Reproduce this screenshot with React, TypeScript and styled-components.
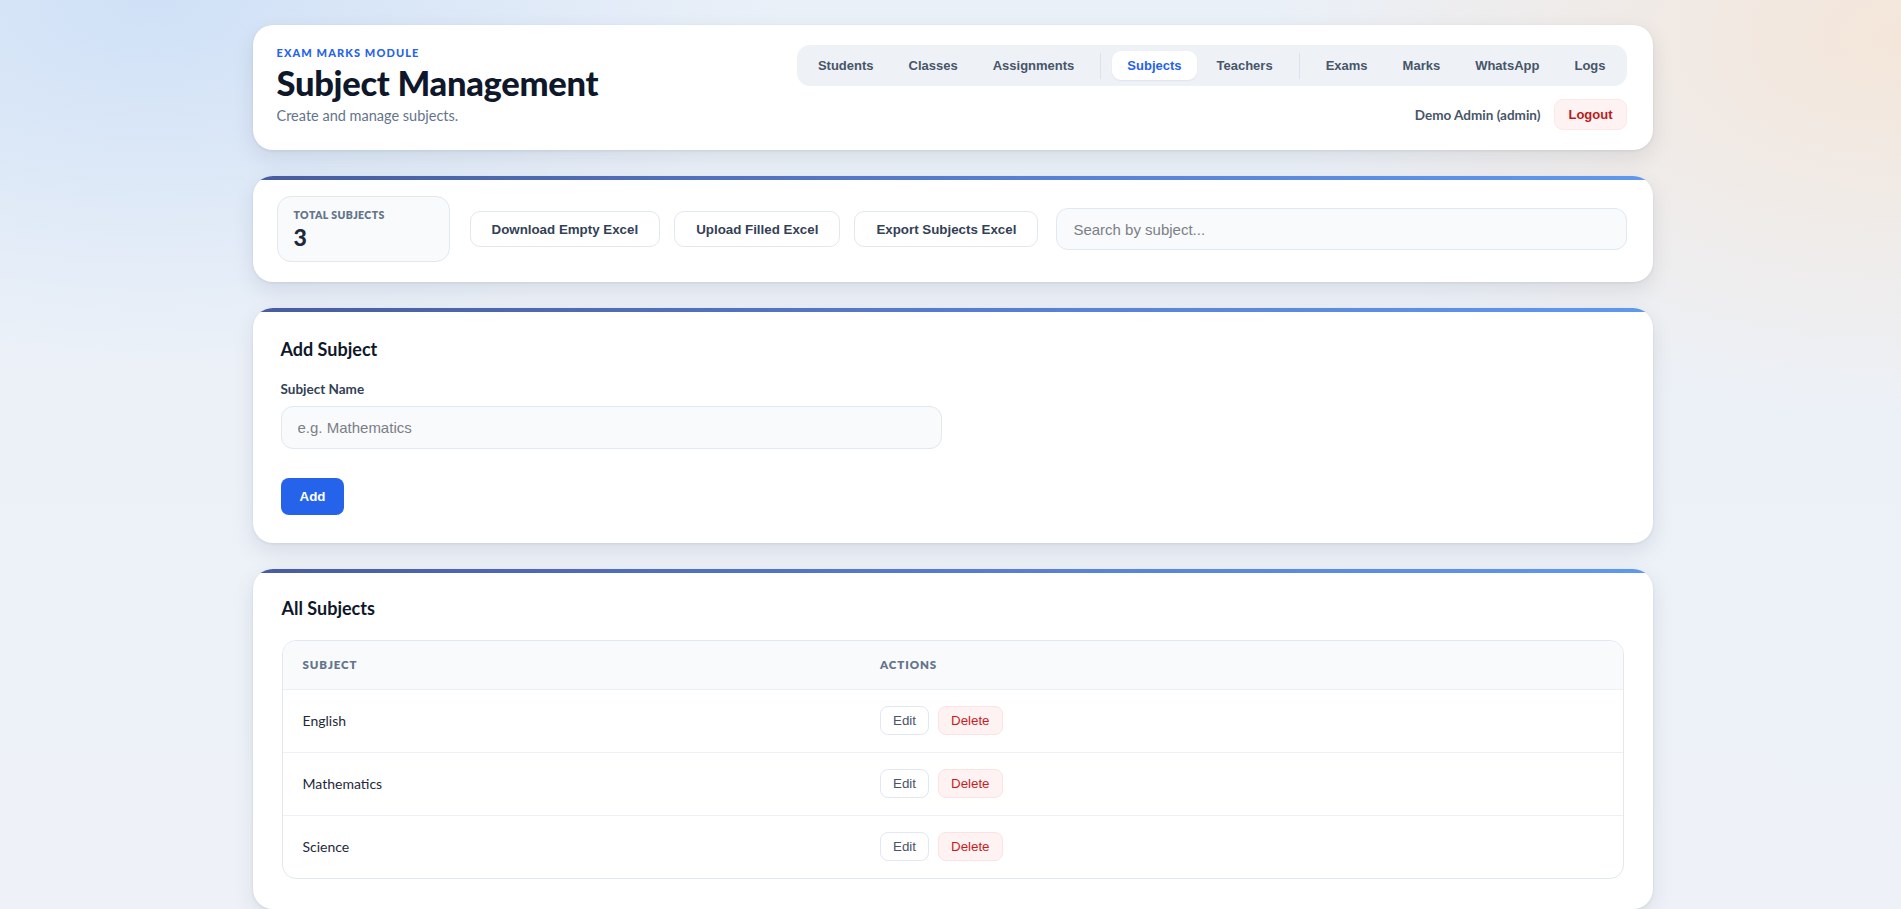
import styled, { createGlobalStyle } from 'styled-components';

const GlobalStyle = createGlobalStyle`
  html, body {
    margin: 0;
    padding: 0;
  }

  body {
    min-height: 100vh;
    padding-left: 4px;
    font-family: Lato, "Noto Sans", Arial, sans-serif;
    color: #0f172a;
    background:
      radial-gradient(ellipse 900px 520px at 8% 0%, rgba(196, 218, 246, 0.7), transparent 70%),
      radial-gradient(ellipse 900px 560px at 100% 4%, rgba(246, 228, 212, 0.85), transparent 70%),
      linear-gradient(180deg, #eaf0f8 0%, #eef2f8 100%);
    background-attachment: fixed;
  }

  * {
    box-sizing: border-box;
  }
`;

const Page = styled.div`
  max-width: 1400px;
  margin: 0 auto;
  padding: 25px 0 30px;
  display: flex;
  flex-direction: column;
  gap: 26px;
`;

const Card = styled.section<{ $accent?: boolean }>`
  border-radius: 20px;
  background: ${(p) =>
    p.$accent
      ? 'linear-gradient(90deg, #485c9f 0%, #5a82d6 60%, #5f98ee 100%) top / 100% 4px no-repeat, #ffffff'
      : '#ffffff'};
  box-shadow: 0 8px 22px rgba(15, 23, 42, 0.09), 0 1px 3px rgba(15, 23, 42, 0.08);
`;

/* header */

const HeaderCard = styled(Card)`
  padding: 20px 26px 20px 24px;
  display: flex;
  justify-content: space-between;
  align-items: flex-start;
`;

const TitleBlock = styled.div`
  display: flex;
  flex-direction: column;
  padding-top: 1px;
`;

const Eyebrow = styled.span`
  font-size: 11px;
  font-weight: 900;
  letter-spacing: 1.1px;
  text-transform: uppercase;
  color: #2563eb;
`;

const Title = styled.h1`
  margin: 4px 0 4px;
  font-size: 34.5px;
  font-weight: 900;
  letter-spacing: -0.3px;
  line-height: 40px;
  color: #0f172a;
`;

const Subtitle = styled.p`
  margin: 0;
  font-size: 14.5px;
  color: #64748b;
`;

const HeaderRight = styled.div`
  display: flex;
  flex-direction: column;
  align-items: flex-end;
  gap: 13px;
`;

const Nav = styled.nav`
  display: flex;
  align-items: center;
  gap: 5px;
  padding: 6px;
  border-radius: 13px;
  background: #eef2f7;
`;

const NavDivider = styled.span`
  width: 1px;
  height: 26px;
  margin: 0 6px;
  background: #dde3ec;
`;

const NavLink = styled.a<{ $active?: boolean }>`
  display: inline-flex;
  align-items: center;
  height: 29px;
  padding: 0 15px;
  border-radius: 9px;
  font-family: "Liberation Sans", Arial, sans-serif;
  font-size: 13px;
  font-weight: 700;
  text-decoration: none;
  cursor: pointer;
  color: ${(p) => (p.$active ? '#2563eb' : '#475569')};
  background: ${(p) => (p.$active ? '#ffffff' : 'transparent')};
  box-shadow: ${(p) => (p.$active ? '0 1px 2px rgba(15, 23, 42, 0.06)' : 'none')};
`;

const UserRow = styled.div`
  display: flex;
  align-items: center;
  gap: 14px;
`;

const UserName = styled.span`
  font-size: 13.5px;
  font-weight: 700;
  color: #475569;
`;

const LogoutButton = styled.button`
  height: 31px;
  padding: 0 13px;
  border: 1px solid #fde8e8;
  border-radius: 9px;
  background: #fef2f2;
  color: #b91c1c;
  font-family: "Liberation Sans", Arial, sans-serif;
  font-size: 13px;
  font-weight: 700;
  cursor: pointer;
`;

/* toolbar */

const ToolbarCard = styled(Card)`
  padding: 20px 26px 20px 24px;
  display: flex;
  align-items: center;
  gap: 14px;
`;

const StatBox = styled.div`
  width: 173px;
  height: 66px;
  margin-right: 6px;
  padding: 12px 16px;
  border: 1px solid #e2e8f0;
  border-radius: 14px;
  background: #f8fafc;
  display: flex;
  flex-direction: column;
  gap: 3px;
`;

const StatLabel = styled.span`
  font-size: 10.5px;
  font-weight: 800;
  letter-spacing: 0.4px;
  text-transform: uppercase;
  color: #64748b;
`;

const StatValue = styled.span`
  font-size: 23px;
  font-weight: 900;
  line-height: 27px;
  color: #1e293b;
`;

const OutlineButton = styled.button`
  height: 36px;
  padding: 0 21px;
  border: 1px solid #e2e8f0;
  border-radius: 10px;
  background: #ffffff;
  color: #334155;
  font-family: "Liberation Sans", Arial, sans-serif;
  font-size: 13.33px;
  font-weight: 700;
  white-space: nowrap;
  cursor: pointer;
`;

const TextInput = styled.input<{ $grow?: boolean }>`
  height: ${(p) => (p.$grow ? '42px' : '43px')};
  flex: ${(p) => (p.$grow ? '1' : 'none')};
  margin-left: ${(p) => (p.$grow ? '4px' : '0')};
  width: 100%;
  padding: 0 16px;
  border: 1px solid #e2e8f0;
  border-radius: 12px;
  background: #f8fafc;
  font-family: "Liberation Sans", Arial, sans-serif;
  font-size: 15px;
  color: #0f172a;
  outline: none;

  &::placeholder {
    color: #7b7f86;
  }
`;

/* add form */

const FormCard = styled(Card)`
  padding: 30px 29px 28px 28px;
`;

const SectionTitle = styled.h2`
  margin: 0 0 21px;
  font-size: 18px;
  font-weight: 700;
  color: #0f172a;
  line-height: 22px;
`;

const FormGrid = styled.div`
  display: grid;
  grid-template-columns: 1fr 1fr;
  gap: 20px;
`;

const Field = styled.label`
  display: flex;
  flex-direction: column;
  gap: 9px;
`;

const FieldLabel = styled.span`
  font-size: 13.5px;
  font-weight: 700;
  color: #334155;
`;

const PrimaryButton = styled.button`
  margin-top: 29px;
  height: 37px;
  padding: 0 19px;
  border: none;
  border-radius: 8px;
  background: #2563eb;
  color: #ffffff;
  font-family: "Liberation Sans", Arial, sans-serif;
  font-size: 13.33px;
  font-weight: 700;
  cursor: pointer;
`;

/* list */

const ListCard = styled(Card)`
  padding: 28px 29px 30px 29px;
`;

const TableWrap = styled.div`
  margin-top: 0;
  border: 1px solid #e2e8f0;
  border-radius: 14px;
  overflow: hidden;
`;

const Table = styled.table`
  width: 100%;
  border-collapse: collapse;
`;

const HeadCell = styled.th<{ $width?: string }>`
  width: ${(p) => p.$width || 'auto'};
  height: 48px;
  padding: 0 20px;
  background: #f8fafc;
  border-bottom: 1px solid #edf1f6;
  text-align: left;
  font-size: 11.5px;
  font-weight: 800;
  letter-spacing: 0.9px;
  text-transform: uppercase;
  color: #64748b;
`;

const Row = styled.tr`
  & + & td {
    border-top: 1px solid #edf1f6;
  }
`;

const Cell = styled.td`
  height: 63px;
  padding: 0 20px;
  font-size: 14px;
  color: #1e293b;
`;

const Actions = styled.div`
  display: flex;
  gap: 9px;
`;

const SmallButton = styled.button<{ $danger?: boolean }>`
  height: 29px;
  padding: 0 12px;
  border-radius: 8px;
  border: 1px solid ${(p) => (p.$danger ? '#fde2e2' : '#e2e8f0')};
  background: ${(p) => (p.$danger ? '#fef2f2' : '#ffffff')};
  color: ${(p) => (p.$danger ? '#c81e1e' : '#475569')};
  font-family: "Liberation Sans", Arial, sans-serif;
  font-size: 13.33px;
  cursor: pointer;
`;

const navGroups = [
  ['Students', 'Classes', 'Assignments'],
  ['Subjects', 'Teachers'],
  ['Exams', 'Marks', 'WhatsApp', 'Logs'],
];

const subjects = ['English', 'Mathematics', 'Science'];

export default function App() {
  return (
    <>
      <GlobalStyle />
      <Page>
        <HeaderCard>
          <TitleBlock>
            <Eyebrow>Exam Marks Module</Eyebrow>
            <Title>Subject Management</Title>
            <Subtitle>Create and manage subjects.</Subtitle>
          </TitleBlock>
          <HeaderRight>
            <Nav>
              {navGroups.map((group, gi) => [
                gi > 0 ? <NavDivider key={`divider-${gi}`} /> : null,
                ...group.map((name) => (
                  <NavLink key={name} $active={name === 'Subjects'}>
                    {name}
                  </NavLink>
                )),
              ])}
            </Nav>
            <UserRow>
              <UserName>Demo Admin (admin)</UserName>
              <LogoutButton>Logout</LogoutButton>
            </UserRow>
          </HeaderRight>
        </HeaderCard>

        <ToolbarCard $accent>
          <StatBox>
            <StatLabel>Total Subjects</StatLabel>
            <StatValue>{subjects.length}</StatValue>
          </StatBox>
          <OutlineButton>Download Empty Excel</OutlineButton>
          <OutlineButton>Upload Filled Excel</OutlineButton>
          <OutlineButton>Export Subjects Excel</OutlineButton>
          <TextInput $grow placeholder="Search by subject..." />
        </ToolbarCard>

        <FormCard $accent>
          <SectionTitle>Add Subject</SectionTitle>
          <FormGrid>
            <Field>
              <FieldLabel>Subject Name</FieldLabel>
              <TextInput placeholder="e.g. Mathematics" />
            </Field>
          </FormGrid>
          <PrimaryButton>Add</PrimaryButton>
        </FormCard>

        <ListCard $accent>
          <SectionTitle>All Subjects</SectionTitle>
          <TableWrap>
            <Table>
              <thead>
                <tr>
                  <HeadCell $width="43.1%">Subject</HeadCell>
                  <HeadCell>Actions</HeadCell>
                </tr>
              </thead>
              <tbody>
                {subjects.map((s) => (
                  <Row key={s}>
                    <Cell>{s}</Cell>
                    <Cell>
                      <Actions>
                        <SmallButton>Edit</SmallButton>
                        <SmallButton $danger>Delete</SmallButton>
                      </Actions>
                    </Cell>
                  </Row>
                ))}
              </tbody>
            </Table>
          </TableWrap>
        </ListCard>
      </Page>
    </>
  );
}
